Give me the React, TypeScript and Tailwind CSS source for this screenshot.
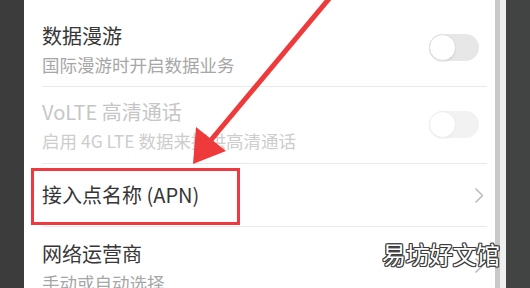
const font = { fontFamily: '"Noto Sans CJK SC", "Noto Sans", sans-serif' };

const Toggle = ({ disabled }: { disabled?: boolean }) => (
  <div
    className={`w-[50px] h-[27px] rounded-full bg-[#e7e7e7] flex items-center ${disabled ? 'opacity-50' : ''}`}
  >
    <div className="w-[27px] h-[27px] rounded-full bg-white border border-[#dcdcdc] shadow-[0_1px_1px_rgba(0,0,0,0.08)]" />
  </div>
);

const Chevron = () => (
  <svg width="10" height="17" viewBox="0 0 10 17" fill="none">
    <polyline points="1.5,1.5 8.5,8.5 1.5,15.5" stroke="#bcbcbc" strokeWidth="1.6" strokeLinejoin="round" />
  </svg>
);

const Divider = () => <div className="h-px shrink-0 bg-[#e9e9e9] ml-[18px] mr-[8px]" />;

export default function App() {
  return (
    <div className="relative w-[530px] h-[288px] overflow-hidden flex bg-[#414442]" style={font}>
      <div className="w-[24px] bg-[#3c3c3c]" />

      {/* settings panel */}
      <div className="w-[471px] bg-white flex flex-col overflow-hidden">
        <div className="h-[86px] shrink-0 flex justify-between items-start">
          <div className="pl-[18px] pt-[22px] flex flex-col">
            <span className="text-[20px] leading-[28px] text-[#363636]">数据漫游</span>
            <span className="text-[17.5px] leading-[29px] text-[#a6a6a6]">国际漫游时开启数据业务</span>
          </div>
          <div className="mt-[34px] mr-[16px]">
            <Toggle />
          </div>
        </div>
        <Divider />

        <div className="h-[76px] shrink-0 flex justify-between items-start">
          <div className="pl-[18px] pt-[11px] flex flex-col">
            <span className="text-[20px] leading-[28px] text-[#c6c6c6]">VoLTE 高清通话</span>
            <span className="text-[17.5px] leading-[29px] text-[#cdcdcd]">启用 4G LTE 数据来提供高清通话</span>
          </div>
          <div className="mt-[24px] mr-[16px]">
            <Toggle disabled />
          </div>
        </div>
        <Divider />

        <div className="h-[62px] shrink-0 flex justify-between items-center">
          <span className="pl-[18px] text-[20px] leading-[28px] text-[#363636]">接入点名称 (APN)</span>
          <div className="mr-[11px] mt-[1px]">
            <Chevron />
          </div>
        </div>
        <Divider />

        <div className="shrink-0 flex justify-between items-start">
          <div className="pl-[18px] pt-[13px] flex flex-col">
            <span className="text-[20px] leading-[28px] text-[#363636]">网络运营商</span>
            <span className="text-[17.5px] leading-[29px] text-[#a6a6a6]">手动或自动选择</span>
          </div>
          <div className="mt-[30px] mr-[11px]">
            <Chevron />
          </div>
        </div>
      </div>

      <div className="w-[5px] bg-[#c8c8c8]" />
      <div className="w-[6px] bg-[#efefef]" />
      <div className="flex-1 bg-[#414442]" />

      {/* annotation: arrow */}
      <svg className="absolute inset-0 pointer-events-none" width="530" height="288" viewBox="0 0 530 288">
        <line x1="211" y1="140" x2="333" y2="-6" stroke="#ef3a3c" strokeWidth="5" />
        <polygon points="193,164 196,127 226,151" fill="#ef3a3c" />
      </svg>

      {/* annotation: highlight box */}
      <div className="absolute left-[31px] top-[168px] w-[209px] h-[57px] border-[3px] border-[#ee3a3e]" />

      {/* watermark */}
      <div
        className="absolute left-[382px] top-[239px] text-[24px] leading-[30px] text-white tracking-[-0.5px] [text-shadow:1px_0_#3a3a3a,-1px_0_#3a3a3a,0_1px_#3a3a3a,0_-1px_#3a3a3a,1px_1px_#3a3a3a,-1px_-1px_#3a3a3a,1px_-1px_#3a3a3a,-1px_1px_#3a3a3a]"
      >
        易坊好文馆
      </div>
    </div>
  );
}
